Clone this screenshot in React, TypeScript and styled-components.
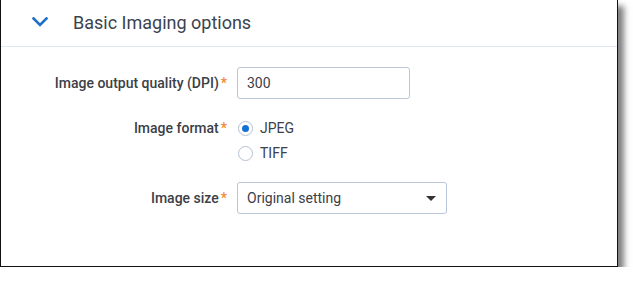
import styled, { createGlobalStyle } from 'styled-components';

const GlobalStyle = createGlobalStyle`
  html, body {
    margin: 0;
    padding: 0;
    background: #ffffff;
  }
  body {
    font-family: Roboto, "Liberation Sans", Arial, sans-serif;
  }
`;

export default function App() {
  return (
    <>
      <GlobalStyle />
      <Frame>
        <Header>
          <Chevron width="16" height="10" viewBox="0 0 16 10">
            <path d="M1.5 1.5 L8 8 L14.5 1.5" fill="none" stroke="#1b6fc9" strokeWidth="2.6" strokeLinecap="square" />
          </Chevron>
          <Title>Basic Imaging options</Title>
        </Header>
        <Form>
          <Label>
            Image output quality (DPI)<Required>*</Required>
          </Label>
          <TextInput defaultValue="300" />

          <Label $top>
            Image format<Required>*</Required>
          </Label>
          <RadioGroup>
            <RadioRow>
              <Radio $checked />
              JPEG
            </RadioRow>
            <RadioRow>
              <Radio />
              TIFF
            </RadioRow>
          </RadioGroup>

          <Label>
            Image size<Required>*</Required>
          </Label>
          <Select>
            <span>Original setting</span>
            <Caret />
          </Select>
        </Form>
      </Frame>
    </>
  );
}

const Frame = styled.div`
  box-sizing: border-box;
  width: 618px;
  height: 267px;
  border: 1px solid #111;
  border-top: none;
  background: #fff;
  box-shadow: 6px 6px 6px rgba(0, 0, 0, 0.5);
`;

const Header = styled.div`
  height: 46px;
  border-bottom: 1px solid #e1e8ef;
  display: flex;
  align-items: center;
  padding-left: 31px;
`;

const Chevron = styled.svg`
  display: block;
  margin-top: -2px;
`;

const Title = styled.div`
  margin-left: 25px;
  font-size: 18px;
  color: #3a4350;
  margin-top: -2px;
`;

const Form = styled.div`
  display: grid;
  grid-template-columns: 226px 172px;
  column-gap: 10px;
  row-gap: 20px;
  padding-top: 20px;
  align-items: center;
`;

const Label = styled.div<{ $top?: boolean }>`
  justify-self: end;
  align-self: ${(p) => (p.$top ? 'start' : 'center')};
  margin-top: ${(p) => (p.$top ? '1px' : '0')};
  font-size: 14px;
  font-weight: 500;
  color: #3c4047;
  white-space: nowrap;
`;

const Required = styled.span`
  color: #f0882d;
  margin-left: 2px;
`;

const TextInput = styled.input`
  box-sizing: border-box;
  width: 173px;
  height: 32px;
  border: 1px solid #b9c6d8;
  border-radius: 3px;
  padding: 0 9px;
  font-family: inherit;
  font-size: 14px;
  color: #3c4047;
  outline: none;
`;

const RadioGroup = styled.div`
  display: flex;
  flex-direction: column;
  gap: 7px;
`;

const RadioRow = styled.label`
  display: flex;
  align-items: center;
  gap: 7px;
  height: 18px;
  font-size: 14px;
  color: #3c4047;
  padding-left: 1px;
`;

const Radio = styled.span<{ $checked?: boolean }>`
  box-sizing: border-box;
  width: 15px;
  height: 15px;
  border-radius: 50%;
  border: 1.5px solid #b3c0d2;
  background: #fff;
  display: flex;
  align-items: center;
  justify-content: center;
  &::after {
    content: '';
    width: 7px;
    height: 7px;
    border-radius: 50%;
    background: ${(p) => (p.$checked ? '#1570d6' : 'transparent')};
  }
`;

const Select = styled.div`
  box-sizing: border-box;
  width: 210px;
  height: 32px;
  border: 1px solid #b9c6d8;
  border-radius: 3px;
  padding: 0 9px;
  display: flex;
  align-items: center;
  justify-content: space-between;
  font-size: 14px;
  color: #3c4047;
`;

const Caret = styled.span`
  width: 0;
  height: 0;
  margin-right: 1px;
  border-left: 5px solid transparent;
  border-right: 5px solid transparent;
  border-top: 5px solid #333;
`;
